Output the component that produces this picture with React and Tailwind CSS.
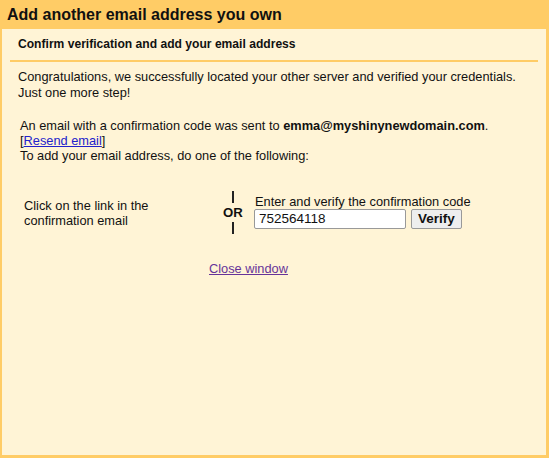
export default function App() {
  return (
    <div className="flex h-[458px] w-[549px] flex-col bg-[#ffcc66] font-['Liberation_Sans',Arial,sans-serif] text-[12.8px] text-[#111]">
      <div className="flex h-[29px] items-center pl-[7px] text-[16px] font-bold text-[#111]">
        Add another email address you own
      </div>
      <div className="flex-1 border-b-[3px] border-l-2 border-r-[3px] border-[#ffcc66] bg-[#fff4d6]">
        <div className="pl-4 pt-[8px] text-[12.1px] font-bold leading-[15px]">
          Confirm verification and add your email address
        </div>
        <div className="mx-2 mt-[8px] h-[2px] bg-[#ffcc66]" />
        <div className="mt-[7px] pl-4 leading-[16px]">
          Congratulations, we successfully located your other server and verified your credentials.
          <br />
          Just one more step!
        </div>
        <div className="mt-[17px] pl-[18px] leading-[15px]">
          An email with a confirmation code was sent to <b>emma@myshinynewdomain.com</b>.
          <br />
          [<a href="#" className="text-[#2222cc] underline">Resend email</a>]
          <br />
          To add your email address, do one of the following:
        </div>
        <div className="mt-[28px] flex items-center pl-[22px]">
          <div className="w-[196px] leading-[15px]">
            Click on the link in the
            <br />
            confirmation email
          </div>
          <div className="flex w-[26px] flex-col items-center">
            <div className="h-[12px] w-[2px] bg-[#222]" />
            <div className="py-[3px] text-[13.2px] font-bold leading-[13px]">OR</div>
            <div className="h-[12px] w-[2px] bg-[#222]" />
          </div>
          <div className="mb-[2px] ml-[8px] flex flex-col">
            <div className="pl-px leading-[15px]">Enter and verify the confirmation code</div>
            <div className="flex items-center gap-[5px]">
              <input
                readOnly
                value="752564118"
                className="h-[20px] w-[152px] rounded-[2px] border border-[#999] bg-white px-[4px] text-[13.5px] text-[#111] outline-none"
              />
              <button className="h-[20px] rounded-[2px] border border-[#999] bg-[#eeeeee] px-[6px] text-[13.5px] font-bold leading-[18px] text-[#111]">
                Verify
              </button>
            </div>
          </div>
        </div>
        <div className="mt-[27px] pl-[207px] leading-[15px]">
          <a href="#" className="text-[#663399] underline">Close window</a>
        </div>
      </div>
    </div>
  );
}
